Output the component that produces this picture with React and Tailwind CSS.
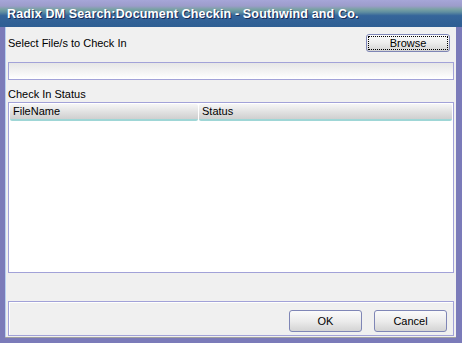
import React from "react";

// Win-style dialog: Document Checkin
function Btn({ label, focused, className }) {
  return (
    <div
      className={
        "flex items-center justify-center rounded-[3px] border border-[#7f86b6] bg-gradient-to-b from-[#fbfbfb] via-[#ececec] to-[#d4d4d4] text-[11px] text-black " +
        className
      }
    >
      {focused ? (
        <div className="flex h-full w-full items-center justify-center border border-dotted border-black">
          {label}
        </div>
      ) : (
        label
      )}
    </div>
  );
}

export default function App() {
  return (
    <div
      className="flex h-[343px] w-[462px] flex-col bg-[#7b7bb9]"
      style={{ fontFamily: '"Liberation Sans", Arial, sans-serif' }}
    >
      {/* Title bar */}
      <div className="flex h-[27px] items-center bg-[linear-gradient(to_bottom,#a6a6d8_0%,#9c9cca_22%,#7aa2a4_34%,#5f8ea0_45%,#35659a_58%,#2e5e93_100%)] pl-[7px] pt-[1px]">
        <span className="text-[12.5px] font-bold tracking-[0.15px] text-white [text-shadow:1px_1px_0_#1a2a55]">
          Radix DM Search:Document Checkin - Southwind and Co.
        </span>
      </div>

      {/* Window body */}
      <div className="flex flex-1 flex-col pb-[5px] pl-[5px] pr-[6px]">
        <div className="flex flex-1 flex-col border-l border-[#b7d0f0] bg-[#f0f0f0] pb-[1px] pl-[2px] pr-[2px] pt-[7px]">
          <div className="flex h-[18px] items-center justify-between">
            <span className="text-[11px] text-black">Select File/s to Check In</span>
            <Btn label="Browse" focused className="mr-[4px] h-[18px] w-[84px] p-[1px]" />
          </div>

          <div className="mt-[10px] h-[18px] border border-[#a2a2d8] bg-gradient-to-b from-[#e6e6e6] to-white" />

          <div className="mt-[7px] h-[14px] text-[11px] leading-[14px] text-black">Check In Status</div>

          <div className="mt-[1px] flex h-[171px] flex-col border border-[#a2a2d8] bg-white p-[1px]">
            <div className="flex h-[17px] text-[11px] text-black">
              <div className="flex w-[188px] items-center rounded-[2px] border-b-[2px] border-[#9fd6d6] bg-gradient-to-b from-[#f6f6f6] to-[#cfcfcf] pl-[3px]">
                FileName
              </div>
              <div className="ml-[1px] flex flex-1 items-center rounded-[2px] border-b-[2px] border-[#9fd6d6] bg-gradient-to-b from-[#f6f6f6] to-[#cfcfcf] pl-[3px]">
                Status
              </div>
            </div>
          </div>

          <div className="flex-1" />

          <div className="flex h-[35px] items-center justify-end gap-[12px] border border-[#a2a2d8] pr-[6px] shadow-[inset_1px_1px_0_#ffffff]">
            <Btn label="OK" className="mt-[5px] h-[22px] w-[73px]" />
            <Btn label="Cancel" className="mt-[5px] h-[22px] w-[73px]" />
          </div>
        </div>
        <div className="h-[1px] bg-[#a0a0a0]" />
      </div>
    </div>
  );
}
